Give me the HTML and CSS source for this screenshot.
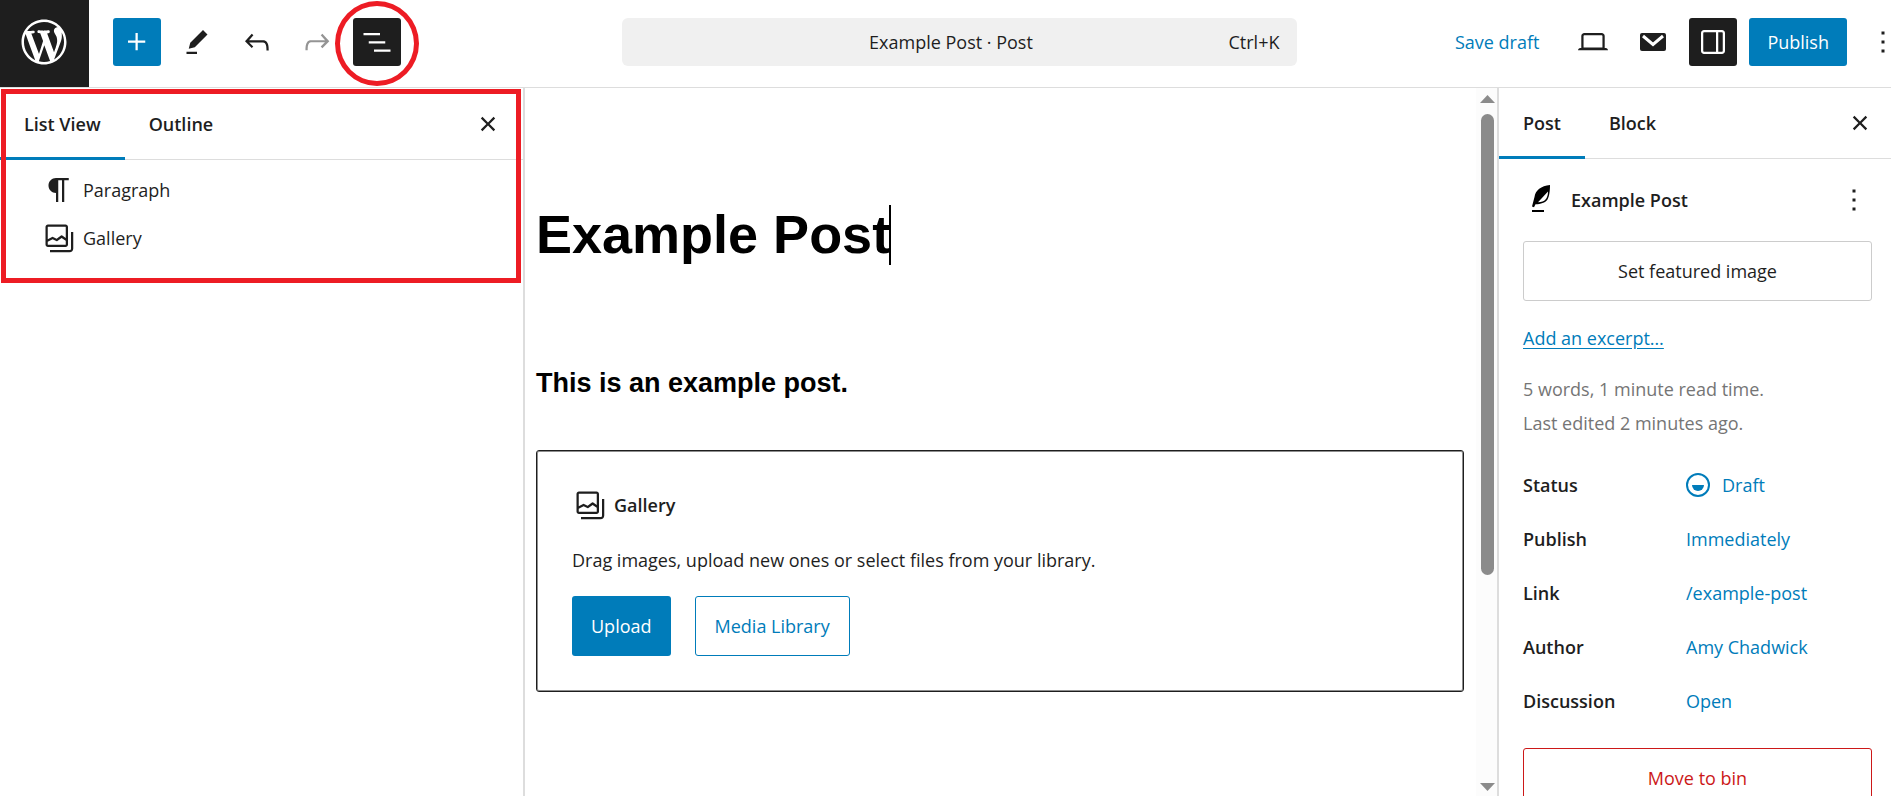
FILE: index.html
```html
<!DOCTYPE html>
<html lang="en">
<head>
<meta charset="utf-8">
<title>Example Post</title>
<link rel="stylesheet" href="styles.css">
</head>
<body>
<div class="editor">
  <header class="topbar">
    <a class="site-logo" href="#" aria-label="View posts">
      <svg viewBox="-2 -2 24 24" width="54" height="54"><path d="M20 10c0-5.51-4.49-10-10-10C4.48 0 0 4.49 0 10c0 5.52 4.48 10 10 10 5.51 0 10-4.48 10-10zM7.78 15.37L4.37 6.22c.55-.02 1.17-.08 1.17-.08.5-.06.44-1.13-.06-1.11 0 0-1.45.11-2.37.11-.18 0-.37 0-.58-.01C4.12 2.69 6.87 1.11 10 1.11c2.33 0 4.45.87 6.05 2.34-.68-.11-1.65.39-1.65 1.58 0 .74.45 1.36.9 2.1.35.61.55 1.36.55 2.46 0 1.49-1.4 5-1.4 5l-3.03-8.37c.54-.02.82-.17.82-.17.5-.05.44-1.25-.06-1.22 0 0-1.44.12-2.38.12-.87 0-2.33-.12-2.33-.12-.5-.03-.56 1.2-.06 1.22l.92.08 1.26 3.41zM17.41 10c.24-.64.74-1.87.43-4.25.7 1.29 1.05 2.71 1.05 4.25 0 3.29-1.73 6.24-4.4 7.78.97-2.59 1.94-5.2 2.92-7.78zM6.1 18.09C3.12 16.65 1.11 13.53 1.11 10c0-1.3.23-2.48.72-3.59C3.25 10.3 4.67 14.2 6.1 18.09zm4.03-6.63l2.58 6.98c-.86.29-1.76.45-2.71.45-.79 0-1.57-.11-2.29-.33.81-2.38 1.62-4.74 2.42-7.1z"/></svg>
    </a>
    <div class="tools">
      <button class="icon-btn primary" aria-label="Add block"><svg class="icon" viewBox="0 0 24 24"><path d="M11 12.5V17.5H12.5V12.5H17.5V11H12.5V6H11V11H6V12.5H11Z"/></svg></button>
      <button class="icon-btn" aria-label="Tools"><svg class="icon" viewBox="0 0 24 24"><path d="m19 7-3-3-8.5 8.5-1 4 4-1L19 7Zm-7 11.5H5V20h7v-1.5Z"/></svg></button>
      <button class="icon-btn" aria-label="Undo"><svg class="icon" viewBox="0 0 24 24"><path d="M18.3 11.7c-.6-.6-1.4-.9-2.3-.9H6.7l2.9-3.3-1.1-1-4.5 5L8.5 16l1-1-2.7-2.7H16c.5 0 .9.2 1.3.5 1 1 1 3.4 1 4.5v.3h1.5v-.2c0-1.5 0-4.3-1.5-5.7z"/></svg></button>
      <button class="icon-btn muted" aria-label="Redo"><svg class="icon" viewBox="0 0 24 24"><path d="M15.6 6.5l-1.1 1 2.9 3.3H8c-.9 0-1.7.3-2.3.9-1.4 1.5-1.4 4.2-1.4 5.6v.2h1.5v-.3c0-1.1 0-3.5 1-4.5.3-.3.7-.5 1.3-.5h9.2L14.5 15l1.1 1.1 4.6-4.6-4.6-5z"/></svg></button>
      <div class="marked">
        <button class="icon-btn dark" aria-label="Document overview"><svg class="icon" viewBox="0 0 24 24"><path d="M3 6h11v1.5H3V6Zm3.5 5.5h11V13h-11v-1.5ZM21 17H10v1.5h11V17Z"/></svg></button>
        <span class="mark-circle"></span>
      </div>
    </div>
    <button class="command-bar">
      <span class="command-title">Example Post · Post</span>
      <span class="command-key">Ctrl+K</span>
    </button>
    <div class="actions">
      <button class="text-btn">Save draft</button>
      <button class="icon-btn" aria-label="View"><svg class="icon" viewBox="0 0 24 24"><path d="M20.5 16h-.7V8c0-1.1-.9-2-2-2H6.2c-1.1 0-2 .9-2 2v8h-.7c-.8 0-1.5.7-1.5 1.5h20c0-.8-.7-1.5-1.5-1.5zM5.7 8c0-.3.2-.5.5-.5h11.6c.3 0 .5.2.5.5v7.6H5.7V8z"/></svg></button>
      <button class="icon-btn" aria-label="Email"><svg class="icon" viewBox="0 0 36 36"><rect x="5" y="9" width="26" height="18" rx="2"/><path class="envelope-fold" d="M8 12 18 20.500 28 12"/></svg></button>
      <button class="icon-btn dark" aria-label="Settings"><svg class="icon" viewBox="0 0 24 24"><path d="M18 4H6c-1.100 0-2 .9-2 2v12c0 1.100.9 2 2 2h12c1.100 0 2-.9 2-2V6c0-1.100-.9-2-2-2zm-4 14.500H6c-.3 0-.5-.2-.5-.5V6c0-.3.2-.5.5-.5h8v13zm4.500-.5c0 .3-.2.5-.5.5h-2.500v-13H18c.3 0 .5.2.5.5v12z"/></svg></button>
      <button class="btn primary publish">Publish</button>
      <button class="icon-btn" aria-label="Options"><svg class="icon" viewBox="0 0 24 24"><path d="M13 19h-2v-2h2v2zm0-6h-2v-2h2v2zm0-6h-2V5h2v2z"/></svg></button>
    </div>
  </header>

  <div class="workspace">
    <aside class="overview">
      <div class="tabs">
        <button class="tab selected">List View</button>
        <button class="tab">Outline</button>
        <button class="icon-btn tabs-close" aria-label="Close"><svg class="icon" viewBox="0 0 24 24"><path d="M12 13.060l3.712 3.713 1.061-1.060L13.061 12l3.712-3.712-1.060-1.060L12 10.938 8.288 7.227l-1.061 1.060L10.939 12l-3.712 3.712 1.060 1.061L12 13.061z"/></svg></button>
      </div>
      <ul class="block-list">
        <li><a class="block-row" href="#"><svg class="icon" viewBox="0 0 24 24"><path d="m9.996 14v-.225l.004 0v6.225h1.500v-14.500h2.500v14.500h1.500v-14.500h3v-1.500h-8.504c-2.761 0-5 2.239-5 5 0 2.761 2.239 5 5 5z"/></svg>Paragraph</a></li>
        <li><a class="block-row" href="#"><svg class="icon" viewBox="0 0 24 24"><path fill-rule="evenodd" d="M16.375 4.500H4.625a.125.125 0 0 0-.125.125v8.254l2.859-1.540a.75.75 0 0 1 .68-.016l2.384 1.142 2.890-2.074a.75.75 0 0 1 .874 0l2.313 1.660V4.625a.125.125 0 0 0-.125-.125Zm.125 9.398-2.750-1.975-2.813 2.020a.75.75 0 0 1-.76.067l-2.444-1.170L4.500 14.583v1.792c0 .069.056.125.125.125h11.750a.125.125 0 0 0 .125-.125v-2.477ZM4.625 3C3.728 3 3 3.728 3 4.625v11.750C3 17.273 3.728 18 4.625 18h11.750c.898 0 1.625-.727 1.625-1.625V4.625C18 3.728 17.273 3 16.375 3H4.625ZM20 8v11c0 .69-.31 1-.999 1H6v1.500h13.001c1.520 0 2.499-.982 2.499-2.500V8H20Z"/></svg>Gallery</a></li>
      </ul>
      <span class="mark-box"></span>
    </aside>

    <main class="canvas">
      <article class="post">
        <h1 class="post-title">Example Post<span class="caret"></span></h1>
        <p class="post-text">This is an example post.</p>
        <section class="placeholder">
          <h2 class="placeholder-label"><svg class="icon" viewBox="0 0 24 24"><path fill-rule="evenodd" d="M16.375 4.500H4.625a.125.125 0 0 0-.125.125v8.254l2.859-1.540a.75.75 0 0 1 .68-.016l2.384 1.142 2.890-2.074a.75.75 0 0 1 .874 0l2.313 1.660V4.625a.125.125 0 0 0-.125-.125Zm.125 9.398-2.750-1.975-2.813 2.020a.75.75 0 0 1-.76.067l-2.444-1.170L4.500 14.583v1.792c0 .069.056.125.125.125h11.750a.125.125 0 0 0 .125-.125v-2.477ZM4.625 3C3.728 3 3 3.728 3 4.625v11.750C3 17.273 3.728 18 4.625 18h11.750c.898 0 1.625-.727 1.625-1.625V4.625C18 3.728 17.273 3 16.375 3H4.625ZM20 8v11c0 .69-.31 1-.999 1H6v1.500h13.001c1.520 0 2.499-.982 2.499-2.500V8H20Z"/></svg>Gallery</h2>
          <p class="placeholder-help">Drag images, upload new ones or select files from your library.</p>
          <div class="placeholder-actions">
            <button class="btn primary tall">Upload</button>
            <button class="btn outline tall">Media Library</button>
          </div>
        </section>
      </article>
      <div class="scrollbar">
        <svg class="arrow" viewBox="0 0 15 8"><path d="M7.500 0 15 8H0z"/></svg>
        <div class="track"><div class="thumb"></div></div>
        <svg class="arrow" viewBox="0 0 15 8"><path d="M0 0h15L7.500 8z"/></svg>
      </div>
    </main>

    <aside class="settings">
      <div class="tabs">
        <button class="tab selected">Post</button>
        <button class="tab">Block</button>
        <button class="icon-btn tabs-close" aria-label="Close settings"><svg class="icon" viewBox="0 0 24 24"><path d="M12 13.060l3.712 3.713 1.061-1.060L13.061 12l3.712-3.712-1.060-1.060L12 10.938 8.288 7.227l-1.061 1.060L10.939 12l-3.712 3.712 1.060 1.061L12 13.061z"/></svg></button>
      </div>
      <div class="summary">
        <div class="summary-head">
          <svg class="icon quill" viewBox="0 0 36 36"><path fill-rule="evenodd" d="M27 3C18 4 12.500 8 11.500 15L9 24.500l2 .8 1.500-3C18 22 22 21 24.500 17.500 26.500 14 27 8 27 3ZM25 9.500c0 3.500-.8 6-2.500 8-1.500 1.800-4 2.500-7.500 2.800Z"/><path d="M9 28h12v2H9z"/></svg>
          <h2 class="summary-title">Example Post</h2>
          <button class="icon-btn" aria-label="Actions"><svg class="icon" viewBox="0 0 24 24"><path d="M13 19h-2v-2h2v2zm0-6h-2v-2h2v2zm0-6h-2V5h2v2z"/></svg></button>
        </div>
        <button class="btn neutral tall">Set featured image</button>
        <a class="excerpt" href="#">Add an excerpt…</a>
        <p class="meta">5 words, 1 minute read time.<br>Last edited 2 minutes ago.</p>
        <dl class="details">
          <dt>Status</dt>
          <dd><a href="#"><svg class="status-icon" viewBox="0 0 24 24"><circle cx="12" cy="12" r="11"/><path d="M6 12h12a6 6 0 0 1-12 0z"/></svg>Draft</a></dd>
          <dt>Publish</dt><dd><a href="#">Immediately</a></dd>
          <dt>Link</dt><dd><a href="#">/example-post</a></dd>
          <dt>Author</dt><dd><a href="#">Amy Chadwick</a></dd>
          <dt>Discussion</dt><dd><a href="#">Open</a></dd>
        </dl>
        <button class="btn danger tall">Move to bin</button>
      </div>
    </aside>
  </div>
</div>
</body>
</html>
```

FILE: styles.css
```css
:root {
  --ink: #1e1e1e;
  --blue: #007cba;
  --line: #dddddd;
  --mark: #ed1c24;
}

* { box-sizing: border-box; }

body {
  margin: 0;
  background: #fff;
  color: var(--ink);
  font: 18px/24px "Open Sans", "Noto Sans", sans-serif;
}

h1, h2, p, ul, dl, dd { margin: 0; }

button {
  border: 0;
  background: none;
  color: inherit;
  font: inherit;
  padding: 0;
  cursor: pointer;
}

a { color: var(--blue); text-decoration: none; }

.editor {
  display: grid;
  grid-template-rows: auto minmax(0, 1fr);
  height: 100vh;
  overflow: hidden;
}

.icon { width: 36px; height: 36px; fill: currentColor; flex: none; display: block; }

/* Top bar */
.topbar {
  display: flex;
  align-items: center;
  height: 88px;
  border-bottom: 1px solid var(--line);
}

.site-logo {
  display: grid;
  place-items: center;
  align-self: stretch;
  width: 89px;
  padding: 0 2px 3px 0;
  background: var(--ink);
  flex: none;
}

.site-logo svg { fill: #fff; }

.tools { display: flex; gap: 12px; margin: 0 64px 0 24px; padding-bottom: 3px; }

.icon-btn {
  display: grid;
  place-items: center;
  width: 48px;
  height: 48px;
  border-radius: 3px;
  flex: none;
}

.primary { background: var(--blue); color: #fff; }
.dark { background: var(--ink); color: #fff; }
.muted { color: #949494; }

.marked { position: relative; }

.mark-circle {
  position: absolute;
  inset: -17px -18px -20px;
  border: 5px solid var(--mark);
  border-radius: 50%;
  pointer-events: none;
}

.command-bar {
  display: grid;
  grid-template-columns: 1fr auto 1fr;
  align-items: center;
  width: 675px;
  height: 48px;
  margin: 0 auto 3px;
  padding: 0 18px 0 0;
  border-radius: 6px;
  background: #f0f0f0;
}

.command-title { grid-column: 2; }
.command-key { justify-self: end; }

.actions {
  display: flex;
  align-items: center;
  gap: 12px;
  margin-right: -16px;
  padding-bottom: 3px;
}

.text-btn { color: var(--blue); margin-right: 18px; }
.envelope-fold { fill: none; stroke: #fff; stroke-width: 3; }

.btn {
  height: 48px;
  padding: 0 18px;
  border-radius: 3px;
  white-space: nowrap;
}

.tall { height: 60px; padding: 0 19px; }

/* Columns */
.workspace {
  display: grid;
  grid-template-columns: 525px minmax(0, 1fr) 394px;
  grid-template-rows: minmax(0, 1fr);
  min-height: 0;
}

.overview { position: relative; border-right: 2px solid var(--line); }

.tabs {
  display: flex;
  align-items: center;
  height: 72px;
  border-bottom: 1px solid var(--line);
}

.tab {
  align-self: stretch;
  margin-bottom: -1px;
  padding: 2px 24px 0;
  border-bottom: 3px solid transparent;
  font-weight: 600;
}

.selected { border-bottom-color: var(--blue); }
.tabs-close { margin-left: auto; margin-right: 7px; }
.overview .tabs-close { margin-right: 11px; }

.block-list { list-style: none; padding: 6px 12px 0 41px; }

.block-row {
  display: flex;
  align-items: center;
  gap: 6px;
  height: 48px;
  color: var(--ink);
}

.mark-box {
  position: absolute;
  inset: 1px 2px auto 1px;
  height: 194px;
  border: 5px solid var(--mark);
  pointer-events: none;
}

/* Canvas */
.canvas { display: grid; grid-template-columns: minmax(0, 1fr) 21px; min-height: 0; }

.post {
  padding: 111px 12px 0 11px;
  color: #000;
  font-family: "Liberation Sans", Arial, sans-serif;
}

.post-title { position: relative; font-size: 54px; line-height: 70px; }

.caret {
  position: absolute;
  top: 6px;
  width: 2px;
  height: 60px;
  margin-left: -1px;
  background: #000;
}

.post-text { margin-top: 93px; font-size: 27px; line-height: 42px; font-weight: 700; }

.placeholder {
  margin-top: 46px;
  padding: 36px 35px 35px;
  border: 1px solid var(--ink);
  border-radius: 3px;
  box-shadow: inset 0 0 0 1px #8e8e8e;
  color: var(--ink);
  font-family: "Open Sans", "Noto Sans", sans-serif;
}

.placeholder-label { display: flex; align-items: center; gap: 6px; font-size: 18px; font-weight: 600; }
.placeholder-help { margin-top: 25px; }
.placeholder-actions { display: flex; gap: 24px; margin-top: 24px; }

.outline { border: 1px solid var(--blue); color: var(--blue); }

.scrollbar {
  display: flex;
  flex-direction: column;
  align-items: center;
  gap: 11px;
  padding: 7px 0 5px 2px;
  background: #fcfcfc;
}

.arrow { width: 15px; height: 8px; fill: #8b8b8b; flex: none; }
.track { flex: 1; width: 13px; }
.thumb { height: 70%; border-radius: 7px; background: #8b8b8b; }

/* Settings */
.settings { border-left: 2px solid var(--line); min-width: 0; overflow: hidden; }
.settings .tabs { height: 71px; }
.summary { display: flex; flex-direction: column; padding: 17px 19px 0 24px; }
.summary-head { display: flex; align-items: center; margin-bottom: 17px; }
.summary-head .icon-btn { margin-left: auto; margin-right: -6px; }
.summary-title { margin-left: 12px; font-size: 18px; font-weight: 600; }
.quill { fill: #000; }

.neutral { border: 1px solid #cccccc; }
.excerpt { align-self: flex-start; margin-top: 25px; text-decoration: underline; text-underline-offset: 3px; }
.meta { margin-top: 22px; color: #757575; line-height: 34px; }

.details {
  display: grid;
  grid-template-columns: 163px 1fr;
  grid-auto-rows: 54px;
  align-items: center;
  margin-top: 18px;
}

.details dt { font-weight: 600; }
.details a { display: flex; align-items: center; gap: 12px; }
.status-icon { width: 24px; height: 24px; fill: var(--blue); }
.status-icon circle { fill: none; stroke: var(--blue); stroke-width: 2; }

.danger { margin-top: 20px; border: 1px solid #cc1818; color: #cc1818; flex: none; }
```
